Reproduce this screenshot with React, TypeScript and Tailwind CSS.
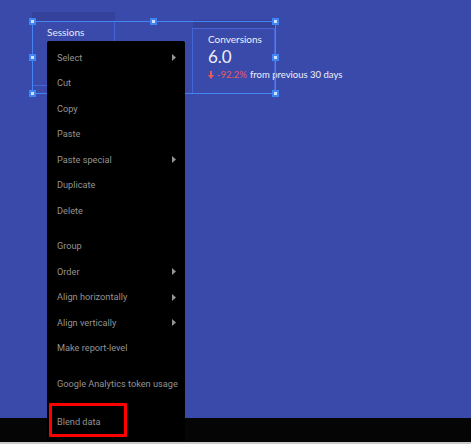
import React from "react";

const Handle = ({ x, y }: { x: number; y: number }) => (
  <div
    className="absolute w-[7px] h-[7px] border-2 border-[#3f86f4] bg-[#cfe0ff]"
    style={{ left: x - 3.5, top: y - 3.5 }}
  />
);

type Item = { label: string; arrow?: boolean; sep?: number };

const items: Item[] = [
  { label: "Select", arrow: true },
  { label: "Cut" },
  { label: "Copy" },
  { label: "Paste" },
  { label: "Paste special", arrow: true },
  { label: "Duplicate" },
  { label: "Delete" },
  { label: "Group", sep: 10 },
  { label: "Order", arrow: true },
  { label: "Align horizontally", arrow: true },
  { label: "Align vertically", arrow: true },
  { label: "Make report-level" },
  { label: "Google Analytics token usage", sep: 10.5 },
  { label: "Blend data", sep: 12 },
];

const handles: [number, number][] = [
  [32.5, 21.5],
  [153.5, 21.5],
  [275.5, 21.5],
  [32.5, 57.5],
  [275.5, 57.5],
  [32.5, 93],
  [153.5, 93],
  [275.5, 93],
];

export default function App() {
  return (
    <div className="w-[471px] h-[444px] flex flex-col overflow-hidden bg-[#3a4aab] font-['Lato',sans-serif]">
      <div className="relative flex-1">
        {/* Sessions chart */}
        <div className="absolute left-[32px] top-[12px] w-[83px] flex flex-col">
          <div className="h-[9px] bg-[#35429c]" />
          <div className="h-[65px] border border-[#4565d6] pl-[14px] pt-[3px]">
            <div className="text-[10px] leading-[14px] text-[#e8eaf6]">Sessions</div>
          </div>
        </div>

        {/* Conversions chart */}
        <div className="absolute left-[192px] top-[20px] w-[83px] flex flex-col">
          <div className="h-[8px] bg-[#35429c] ml-[1px]" />
          <div className="h-[66px] border border-[#4565d6] pl-[15px] pt-[3px] flex flex-col text-[#eef0fa]">
            <div className="text-[10px] leading-[14px]">Conversions</div>
            <div className="text-[17px] leading-[20px] mt-[1px]">6.0</div>
            <div className="flex items-center text-[9.5px] leading-[13px] mt-[1px] whitespace-nowrap">
              <svg width="6" height="8" viewBox="0 0 6 8" className="mr-[3px] shrink-0">
                <path d="M2 0h2v4h2L3 8 0 4h2z" fill="#e85a5a" />
              </svg>
              <span className="text-[#ec5b5b] shrink-0">-92.2%</span>
              <span className="ml-[3px] shrink-0">from previous 30 days</span>
            </div>
          </div>
        </div>

        {/* selection frame */}
        <div className="absolute left-[32px] top-[21px] w-[244px] h-[73px] border border-[#4584f2]" />
        {handles.map(([x, y]) => (
          <Handle key={`${x}-${y}`} x={x} y={y} />
        ))}

        {/* context menu */}
        <div className="absolute left-[47px] top-[41px] w-[138px] h-[400px] bg-black rounded-t-[2px] pt-[4px] flex flex-col font-['Roboto',sans-serif]">
          {items.map((it) => (
            <React.Fragment key={it.label}>
              {it.sep && <div className="shrink-0" style={{ height: it.sep }} />}
              <div className="h-[25.5px] shrink-0 flex items-center justify-between pl-[10px] pr-[9px] text-[9.2px] text-[#939393] whitespace-nowrap">
                <span>{it.label}</span>
                {it.arrow && (
                  <svg width="4" height="7" viewBox="0 0 4 7">
                    <path d="M0 0l4 3.5L0 7z" fill="#939393" />
                  </svg>
                )}
              </div>
            </React.Fragment>
          ))}
        </div>

        {/* red annotation */}
        <div className="absolute left-[49px] top-[403px] w-[78px] h-[34px] border-[3px] border-[#ff0000] rounded-[1px] z-10" />
      </div>
      <div className="h-[24px] shrink-0 bg-[#050505]" />
      <div className="h-[2px] shrink-0 bg-[#c9c9c9]" />
    </div>
  );
}
